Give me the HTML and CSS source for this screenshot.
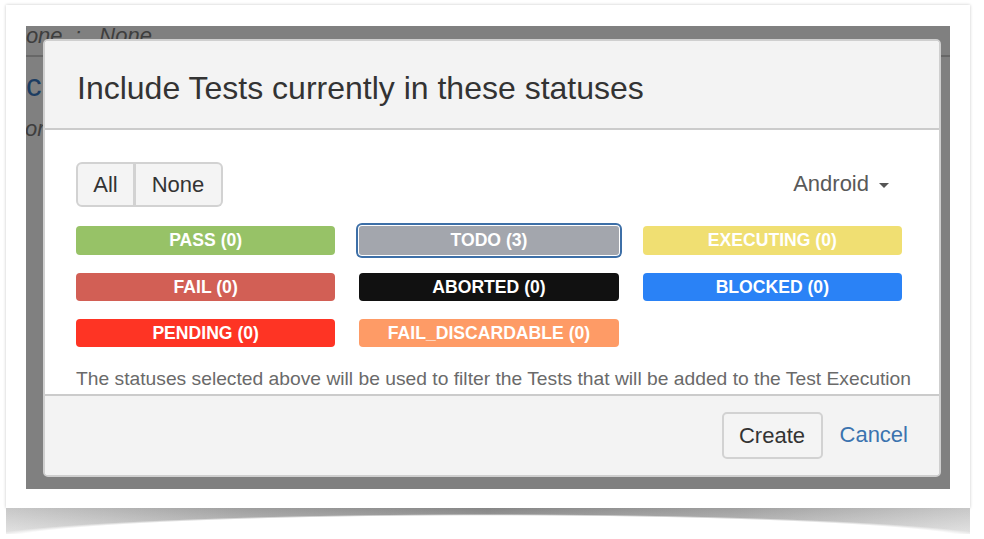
FILE: index.html
```html
<!DOCTYPE html>
<html lang="en">
<head>
<meta charset="utf-8">
<title>Include Tests currently in these statuses</title>
<link rel="stylesheet" href="styles.css">
</head>
<body>
<div class="frame">
  <div class="backdrop">
    <div class="behind">
      <div class="behind-meta">None &nbsp;:&nbsp;&nbsp; None</div>
      <div class="behind-rule"></div>
      <div class="behind-title">c</div>
      <div class="behind-note">or</div>
    </div>
    <div class="modal" role="dialog">
      <div class="modal-header">
        <h2 class="modal-title">Include Tests currently in these statuses</h2>
      </div>
      <div class="modal-body">
        <div class="toolbar">
          <div class="btn-group">
            <button class="btn seg">All</button>
            <button class="btn seg">None</button>
          </div>
          <div class="env">Android <span class="caret"></span></div>
        </div>
        <div class="status-grid">
          <div class="status s-pass">PASS (0)</div>
          <div class="status s-todo selected">TODO (3)</div>
          <div class="status s-exec">EXECUTING (0)</div>
          <div class="status s-fail">FAIL (0)</div>
          <div class="status s-abort">ABORTED (0)</div>
          <div class="status s-block">BLOCKED (0)</div>
          <div class="status s-pend">PENDING (0)</div>
          <div class="status s-disc">FAIL_DISCARDABLE (0)</div>
        </div>
        <p class="desc">The statuses selected above will be used to filter the Tests that will be added to the Test Execution</p>
      </div>
      <div class="modal-footer">
        <button class="btn create">Create</button>
        <a class="cancel" href="#">Cancel</a>
      </div>
    </div>
  </div>
</div>
</body>
</html>
```

FILE: styles.css
```css
* { box-sizing: border-box; }

html, body {
  margin: 0;
  padding: 0;
  background: #ffffff;
}

body {
  font-family: "Liberation Sans", Arial, Helvetica, sans-serif;
  width: 984px;
  height: 539px;
  overflow: hidden;
}

.frame {
  position: relative;
  width: 964px;
  margin: 5px 0 0 6px;
  padding: 21px 20px 19px 20px;
  background: #ffffff;
  box-shadow: 0 0 3px rgba(0, 0, 0, 0.22);
}

.frame::after {
  content: "";
  position: absolute;
  left: 0;
  right: 0;
  top: 100%;
  height: 26px;
  background:
    radial-gradient(ellipse 520px 28px at 50% 34px, #ffffff 94%, rgba(255, 255, 255, 0) 100%),
    linear-gradient(to bottom, rgba(0, 0, 0, 0.06), rgba(255, 255, 255, 0.35)),
    linear-gradient(to right, #d4d4d4 0%, #a8a8a8 25%, #8e8e8e 50%, #a8a8a8 75%, #d4d4d4 100%);
}

.backdrop {
  position: relative;
  height: 463px;
  background: #808080;
  overflow: hidden;
}

.behind {
  color: #3e3e3e;
}

.behind-meta {
  font-style: italic;
  font-size: 22px;
  line-height: 26px;
  margin: -3px 0 0 -16px;
  white-space: nowrap;
}

.behind-rule {
  height: 2px;
  background: #676767;
  margin-top: 6px;
}

.behind-title {
  font-size: 31px;
  line-height: 34px;
  color: #1c3d62;
  margin-top: 12px;
}

.behind-note {
  font-style: italic;
  font-size: 22px;
  line-height: 26px;
  margin: 13px 0 0 -1px;
}

.modal {
  position: absolute;
  left: 17px;
  top: 13px;
  width: 898px;
  height: 438px;
  display: flex;
  flex-direction: column;
  background: #ffffff;
  border: 2px solid #cfcfcf;
  border-radius: 5px;
  overflow: hidden;
}

.modal-header {
  background: #f3f3f3;
  border-bottom: 2px solid #cbcbcb;
  padding: 31px 32px 24px 32px;
}

.modal-title {
  margin: 0;
  font-size: 32px;
  line-height: 32px;
  font-weight: normal;
  color: #333333;
  white-space: nowrap;
}

.modal-body {
  padding: 32px 37px 4px 31px;
}

.toolbar {
  display: flex;
  align-items: center;
  justify-content: space-between;
}

.btn {
  font-family: inherit;
  font-size: 22px;
  color: #333333;
  background: #f4f4f4;
  border: 2px solid #d2d2d2;
  margin: 0;
  cursor: pointer;
}

.btn-group {
  display: flex;
  height: 45px;
}

.seg {
  height: 45px;
  padding: 0 15px;
  line-height: 41px;
}

.seg:first-child {
  border-radius: 6px 0 0 6px;
  width: 59px;
}

.seg:last-child {
  border-left: none;
  border-radius: 0 6px 6px 0;
  width: 88px;
  position: relative;
}

.seg:last-child::before {
  content: "";
  position: absolute;
  left: -1px;
  top: 0;
  bottom: 0;
  width: 2px;
  background: #d2d2d2;
}

.env {
  display: flex;
  align-items: center;
  gap: 10px;
  font-size: 22px;
  color: #595959;
  margin-right: 13px;
  margin-top: -1px;
}

.caret {
  display: inline-block;
  width: 0;
  height: 0;
  border-left: 5px solid transparent;
  border-right: 5px solid transparent;
  border-top: 5px solid #555555;
  margin-top: 3px;
}

.status-grid {
  display: grid;
  grid-template-columns: repeat(3, 1fr);
  column-gap: 24px;
  row-gap: 18px;
  margin-top: 19px;
}

.status {
  height: 29px;
  line-height: 29px;
  border-radius: 4px;
  text-align: center;
  color: #ffffff;
  font-weight: bold;
  font-size: 17.6px;
  white-space: nowrap;
}

.status-grid .status:nth-child(n+4) {
  height: 28px;
  line-height: 28px;
}

.s-pass { background: #97c267; }
.s-todo { background: #a3a6ad; }
.s-exec { background: #f0df72; }
.s-fail { background: #d25f55; }
.s-abort { background: #111111; }
.s-block { background: #2a82f6; }
.s-pend { background: #fe3424; }
.s-disc { background: #fe9b66; }

.selected {
  box-shadow: 0 0 0 1px #ffffff, 0 0 0 3px #3d6fa7;
  border-radius: 3px;
}

.desc {
  margin: 21px 0 0 0;
  font-size: 19.25px;
  line-height: 22px;
  color: #6a6a6a;
  white-space: nowrap;
}

.modal-footer {
  margin-top: auto;
  background: #f3f3f3;
  border-top: 2px solid #cbcbcb;
  display: flex;
  justify-content: flex-end;
  align-items: center;
  gap: 17px;
  padding: 15px 31px 16px 0;
  height: 81px;
}

.create {
  width: 101px;
  height: 47px;
  padding: 0;
  border-radius: 5px;
  line-height: 43px;
}

.cancel {
  font-size: 22px;
  color: #3b73af;
  text-decoration: none;
}
```
